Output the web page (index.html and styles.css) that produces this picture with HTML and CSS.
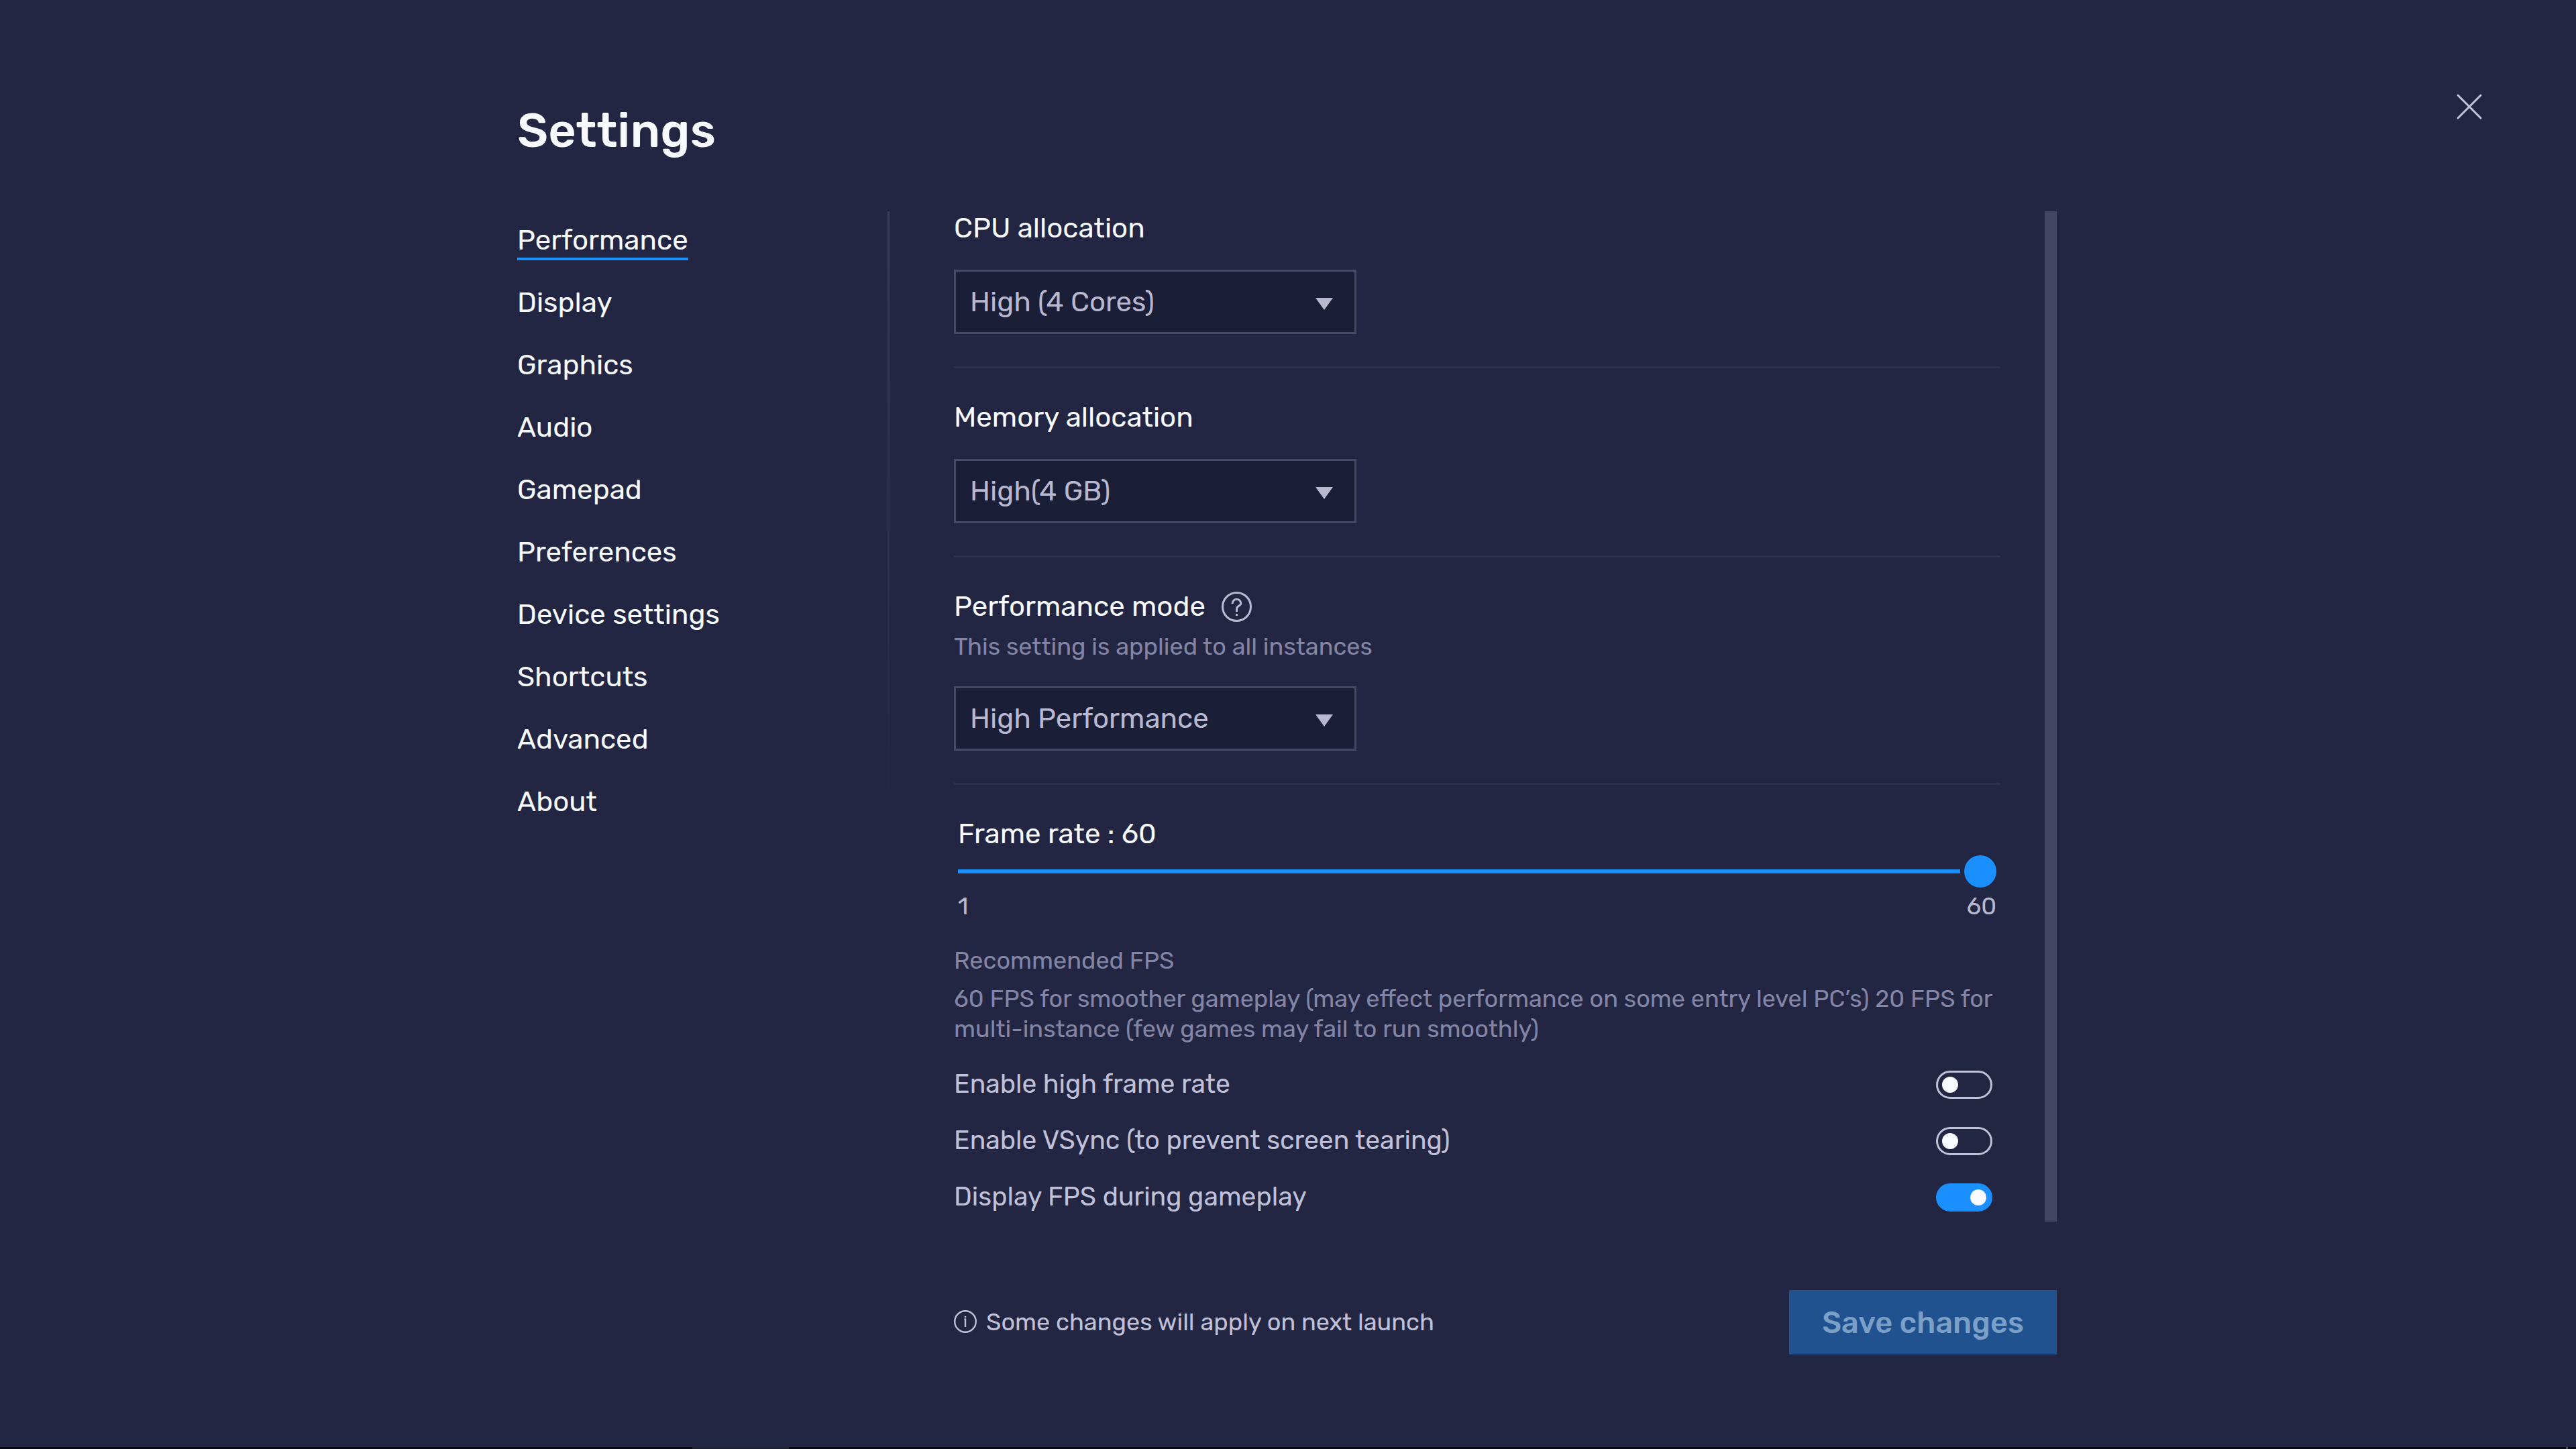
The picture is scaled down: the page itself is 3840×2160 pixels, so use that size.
FILE: index.html
```
<!DOCTYPE html>
<html lang="en">
<head>
  <meta charset="UTF-8" />
  <title>Settings</title>
  <link rel="stylesheet" href="styles.css">
</head>
<body>
  <header class="header">
    <h1>Settings</h1>
    <button class="close" aria-label="Close">
      <svg width="40" height="40" viewBox="0 0 40 40">
        <path d="M3 3 L37 37 M37 3 L3 37" />
      </svg>
    </button>
  </header>

  <main class="content">
    <nav class="sidebar">
      <ul>
        <li><a class="active" href="#">Performance</a></li>
        <li><a href="#">Display</a></li>
        <li><a href="#">Graphics</a></li>
        <li><a href="#">Audio</a></li>
        <li><a href="#">Gamepad</a></li>
        <li><a href="#">Preferences</a></li>
        <li><a href="#">Device settings</a></li>
        <li><a href="#">Shortcuts</a></li>
        <li><a href="#">Advanced</a></li>
        <li><a href="#">About</a></li>
      </ul>
    </nav>
    <div class="divider"></div>

    <div class="right">
      <div class="scroll-area">
        <div class="panel">
          <section class="group">
            <h2>CPU allocation</h2>
            <div class="select"><span>High (4 Cores)</span><i class="arrow"></i></div>
          </section>

          <section class="group">
            <h2>Memory allocation</h2>
            <div class="select"><span>High(4 GB)</span><i class="arrow"></i></div>
          </section>

          <section class="group">
            <h2>Performance mode
              <svg class="help" width="45" height="45" viewBox="0 0 45 45">
                <circle cx="22.5" cy="22.5" r="21" />
                <path d="M16.2 18 V17.2 a6.3 5.9 0 0 1 12.6 0 C28.8 21.5 22.5 20.5 22.5 26 V30" />
                <path d="M22.5 33 V36" />
              </svg>
            </h2>
            <p class="hint">This setting is applied to all instances</p>
            <div class="select"><span>High Performance</span><i class="arrow"></i></div>
          </section>

          <section class="group frame-rate">
            <div class="slider-box">
              <h2>Frame rate : 60</h2>
              <div class="slider">
                <div class="track"></div>
                <div class="thumb"></div>
              </div>
              <div class="range"><span>1</span><span>60</span></div>
            </div>

            <p class="hint recommended">Recommended FPS</p>
            <p class="hint">60 FPS for smoother gameplay (may effect performance on some entry level PC’s) 20 FPS for<br>multi-instance (few games may fail to run smoothly)</p>

            <div class="toggles">
              <div class="toggle-row"><span>Enable high frame rate</span><div class="toggle"></div></div>
              <div class="toggle-row"><span>Enable VSync (to prevent screen tearing)</span><div class="toggle"></div></div>
              <div class="toggle-row"><span>Display FPS during gameplay</span><div class="toggle on"></div></div>
            </div>
          </section>
        </div>
        <div class="scrollbar"></div>
      </div>

      <footer class="footer">
        <div class="note">
          <svg width="34" height="34" viewBox="0 0 34 34">
            <circle cx="17" cy="17" r="15.8" />
            <path d="M17 9 V11.2 M15.4 13.6 H17 V25" />
          </svg>
          <span>Some changes will apply on next launch</span>
        </div>
        <button class="save" disabled>Save changes</button>
      </footer>
    </div>
  </main>

  <div class="taskbar"><div class="task"></div><div class="tick"></div></div>
</body>
</html>
```
FILE: styles.css
```
* {
  margin: 0; padding: 0; box-sizing: border-box;
  font-family: Rubik, Roboto, sans-serif;
}

body {
  width: 3840px;
  height: 2160px;
  overflow: hidden;
  background: #232642;
  color: #f7faff;
  font-size: 42px;
  line-height: 50px;
  display: flex;
  flex-direction: column;
}

.header {
  height: 315px;
  padding: 139px 139px 0 771px;
  display: flex;
  justify-content: space-between;
  align-items: flex-start;
}

.header h1 {
  margin-top: 14px;
  font-size: 72px;
  line-height: 84px;
  font-weight: 500;
}

.close {
  width: 40px;
  height: 40px;
  border: none;
  background: none;
  cursor: pointer;
}

.close svg {
  display: block;
  fill: none;
  stroke: #c3c4db;
  stroke-width: 3;
  stroke-linecap: round;
}

.content {
  flex: 1;
  padding-left: 771px;
  display: flex;
  align-items: flex-start;
}

.sidebar {
  width: 552px;
  padding-top: 17px;
}

.sidebar ul {
  list-style: none;
}

.sidebar li {
  height: 93px;
}

.sidebar a {
  display: inline-block;
  color: #f7faff;
  line-height: 52px;
  text-decoration: none;
}

.sidebar a.active {
  border-bottom: 4px solid #1a8fff;
}

.divider {
  width: 3px;
  height: 885px;
  background: linear-gradient(#3d3e5c, #232642);
}

.right {
  width: 1644px;
  margin-left: 96px;
}

.scroll-area {
  height: 1506px;
  display: flex;
  justify-content: space-between;
}

.panel {
  width: 1560px;
}

.scrollbar {
  width: 18px;
  background: #444563;
}

.group {
  padding-bottom: 48px;
  margin-bottom: 48px;
  border-bottom: 3px solid #2d2f4e;
}

.group.frame-rate {
  padding: 0;
  margin: 0;
  border: none;
}

h2 {
  height: 50px;
  font-size: 42px;
  font-weight: 400;
  display: flex;
  align-items: center;
}

.help {
  margin-left: 24px;
  fill: none;
  stroke: #b9bad3;
  stroke-width: 3;
}

.hint {
  margin-top: 12px;
  color: #8385a6;
  font-size: 36px;
  line-height: 45px;
  white-space: nowrap;
}

.select {
  width: 600px;
  height: 96px;
  margin-top: 37px;
  padding: 0 32px 1px 21px;
  border: 3px solid #464866;
  background: #1a1e37;
  color: #b8b9d1;
  display: flex;
  align-items: center;
  justify-content: space-between;
}

.arrow {
  margin-top: 7px;
  border-left: 13px solid transparent;
  border-right: 13px solid transparent;
  border-top: 18px solid #b8b9d1;
}

.slider-box {
  margin: 0 6px;
}

.slider {
  height: 48px;
  margin-top: 7px;
  display: flex;
  align-items: center;
  gap: 6px;
}

.track {
  flex: 1;
  height: 6px;
  background: #1a8fff;
}

.thumb {
  width: 48px;
  height: 48px;
  border-radius: 50%;
  background: #1a8fff;
}

.range {
  margin-top: 5px;
  color: #b8b9d1;
  font-size: 36px;
  line-height: 45px;
  display: flex;
  justify-content: space-between;
}

.hint.recommended {
  margin-top: 36px;
}

.toggles {
  margin: 40px 12px 0 0;
  display: flex;
  flex-direction: column;
  gap: 42px;
}

.toggle-row {
  height: 42px;
  color: #c0c1d8;
  font-size: 39px;
  line-height: 40px;
  display: flex;
  justify-content: space-between;
}

.toggle {
  width: 84px;
  height: 42px;
  padding: 0 6px;
  border: 3px solid #c0c1d8;
  border-radius: 21px;
  display: flex;
  align-items: center;
}

.toggle::before {
  content: "";
  width: 24px;
  height: 24px;
  border-radius: 50%;
  background: #f7faff;
}

.toggle.on {
  justify-content: flex-end;
  border-color: #1a8fff;
  background: #1a8fff;
}

.footer {
  margin-top: 102px;
  display: flex;
  justify-content: space-between;
  align-items: center;
}

.note {
  color: #c0c1d8;
  font-size: 36px;
  display: flex;
  align-items: center;
  gap: 14px;
}

.note svg {
  margin-bottom: 2px;
  fill: none;
  stroke: #c0c1d8;
  stroke-width: 2.4;
}

.save {
  width: 399px;
  height: 96px;
  border: none;
  background: #1f528e;
  color: #7c9fc7;
  font-size: 45px;
  font-weight: 500;
}

.taskbar {
  height: 3px;
  padding: 0 12px 0 1032px;
  background: #0c0b14;
  display: flex;
  justify-content: space-between;
}

.task {
  width: 144px;
  background: #23222e;
}

.tick {
  width: 3px;
  background: #4b4a52;
}
```
